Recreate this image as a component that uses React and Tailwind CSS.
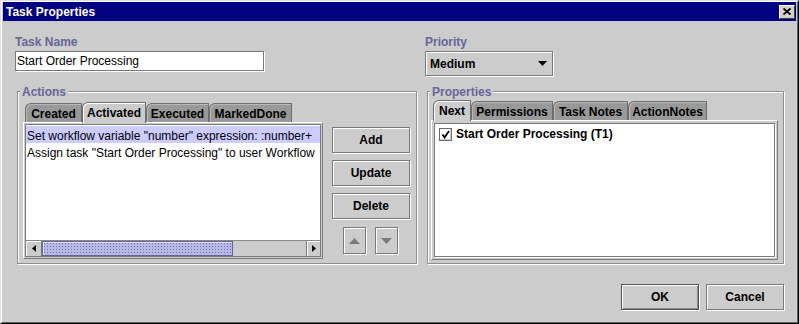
import React from 'react';

const flush = 'border border-[#7a7a7a] shadow-[inset_1px_1px_0_#ffffff,1px_1px_0_#ffffff]';

const Label = ({ children }) => (
  <div className="h-[16px] leading-[15px] text-[12px] font-bold text-[#666699]">{children}</div>
);

const Button = ({ children, primary }) => (
  <div
    className={
      primary
        ? 'w-[78px] h-[26px] flex items-center justify-center text-[12px] font-bold border border-[#505050] shadow-[inset_1px_1px_0_#ffffff,inset_-1px_-1px_0_#8a8a8a,1px_1px_0_#ffffff]'
        : 'w-[78px] h-[26px] flex items-center justify-center text-[12px] font-bold border border-[#7a7a7a] shadow-[inset_1px_1px_0_#ffffff,1px_1px_0_#ffffff]'
    }
  >
    {children}
  </div>
);

const Tab = ({ label, width, active }) => (
  <div
    className={
      active
        ? `${width} h-[21px] -mb-px relative z-10 flex items-center justify-center pb-px text-[12px] font-bold bg-[#cccccc] border border-b-0 border-[#6e6e6e] rounded-tl-[6px] shadow-[inset_1px_1px_0_#ffffff]`
        : `${width} h-[19px] flex items-center justify-center pt-px text-[12px] font-bold bg-[#999999] border border-b-0 border-[#6e6e6e] rounded-tl-[6px] shadow-[inset_1px_1px_0_#b8b8b8]`
    }
  >
    {label}
  </div>
);

const Group = ({ title, width, children }) => (
  <div className={`${width} h-[173px] relative border border-[#8e8e8e] shadow-[inset_1px_1px_0_#ffffff,1px_1px_0_#ffffff]`}>
    <span className="absolute left-[2px] top-[-7px] px-[2px] bg-[#cccccc] leading-[15px] text-[12px] font-bold text-[#666699]">
      {title}
    </span>
    {children}
  </div>
);

const Arrow = ({ dir }) => (
  <div className={`w-[23px] h-[27px] flex items-center justify-center ${flush}`}>
    <svg width="11" height="6" viewBox="0 0 11 6">
      {dir === 'up' ? (
        <polygon points="0,6 5.5,0 11,6" fill="#7a7a7a" />
      ) : (
        <polygon points="0,0 5.5,6 11,0" fill="#7a7a7a" />
      )}
    </svg>
  </div>
);

export default function App() {
  return (
    <div className="w-[799px] h-[324px] overflow-hidden bg-[#cccccc] text-black font-['Liberation_Sans',Arial,sans-serif] border border-t-[#e0e0e0] border-l-[#e0e0e0] border-r-black border-b-black">
      <div className="h-full flex flex-col border border-t-white border-l-white border-r-[#606060] border-b-[#606060]">
        {/* title bar */}
        <div className="h-[19px] mx-px bg-[#000080] flex items-center justify-between pl-[3px] pr-[1px]">
          <span className="text-white text-[12px] font-bold leading-none">Task Properties</span>
          <div className="w-[16px] h-[14px] bg-[#d4d0c8] flex items-center justify-center border border-t-white border-l-white border-r-[#404040] border-b-[#404040]">
            <svg width="8" height="7" viewBox="0 0 8 7">
              <path d="M0.5 0.5 L7.5 6.5 M7.5 0.5 L0.5 6.5" stroke="black" strokeWidth="1.8" />
            </svg>
          </div>
        </div>

        <div className="flex-1 flex flex-col pl-[13px] pt-[14px]">
          {/* name + priority */}
          <div className="flex">
            <div className="w-[410px]">
              <Label>Task Name</Label>
              <div className={`w-[249px] h-[20px] bg-white pl-px text-[12px] leading-[18px] ${flush}`}>
                Start Order Processing
              </div>
            </div>
            <div>
              <Label>Priority</Label>
              <div className={`w-[128px] h-[25px] flex items-center justify-between pl-[4px] pr-[5px] ${flush}`}>
                <span className="text-[12px] font-bold leading-[14px]">Medium</span>
                <svg width="9" height="5" viewBox="0 0 9 5">
                  <polygon points="0,0 9,0 4.5,5" fill="black" />
                </svg>
              </div>
            </div>
          </div>

          {/* groups */}
          <div className="flex mt-[15px] ml-[2px]">
            <Group title="Actions" width="w-[400px]">
              <div className="flex pl-[5px] pt-[10px]">
                <div className="w-[300px]">
                  <div className="h-[20px] flex items-end pl-[2px]">
                    <Tab label="Created" width="w-[57px]" />
                    <Tab label="Activated" width="w-[64px]" active />
                    <Tab label="Executed" width="w-[63px]" />
                    <Tab label="MarkedDone" width="w-[83px]" />
                  </div>
                  <div className="h-[137px] p-px border border-t-white border-l-white border-r-[#7a7a7a] border-b-[#7a7a7a]">
                    <div className="h-full flex flex-col border border-[#7a7a7a] bg-white">
                      <div className="flex-1 pt-px overflow-hidden whitespace-nowrap text-[12px]">
                        <div className="h-[17px] pt-[4px] pl-px leading-[13px] bg-[#ccccff]">
                          Set workflow variable "number" expression: :number+
                        </div>
                        <div className="h-[17px] pt-[4px] pl-px leading-[13px]">
                          Assign task "Start Order Processing" to user Workflow
                        </div>
                      </div>
                      <div className="h-[16px] flex border-t border-[#8a8a8a] bg-[#cccccc]">
                        <div className="w-[16px] flex items-center justify-center border-r border-[#7a7a7a] shadow-[inset_1px_1px_0_#ffffff]">
                          <svg width="4" height="7" viewBox="0 0 4 7">
                            <polygon points="4,0 0,3.5 4,7" fill="black" />
                          </svg>
                        </div>
                        <div className="w-[191px] border border-[#666699] bg-[#b8b8e8] bg-[image:radial-gradient(circle,#6f6fae_0.6px,transparent_0.9px)] bg-[length:3px_3px] shadow-[inset_1px_1px_0_#e0e0ff]" />
                        <div className="flex-1" />
                        <div className="w-[14px] flex items-center justify-center border-l border-[#7a7a7a] shadow-[inset_1px_1px_0_#ffffff]">
                          <svg width="4" height="7" viewBox="0 0 4 7">
                            <polygon points="0,0 4,3.5 0,7" fill="black" />
                          </svg>
                        </div>
                      </div>
                    </div>
                  </div>
                </div>

                <div className="ml-[9px] mt-[25px] flex flex-col gap-[7px]">
                  <Button>Add</Button>
                  <Button>Update</Button>
                  <Button>Delete</Button>
                  <div className="flex gap-[9px] pl-[11px] mt-px">
                    <Arrow dir="up" />
                    <Arrow dir="down" />
                  </div>
                </div>
              </div>
            </Group>

            <div className="ml-[10px]">
              <Group title="Properties" width="w-[357px]">
                <div className="pl-[3px] pt-[8px]">
                  <div className="h-[20px] flex items-end pl-[2px]">
                    <Tab label="Next" width="w-[38px]" active />
                    <Tab label="Permissions" width="w-[82px]" />
                    <Tab label="Task Notes" width="w-[75px]" />
                    <Tab label="ActionNotes" width="w-[79px]" />
                  </div>
                  <div className="w-[347px] h-[140px] p-[2px] border border-t-white border-l-white border-r-[#7a7a7a] border-b-[#7a7a7a]">
                    <div className="h-full border border-[#7a7a7a] bg-white shadow-[1px_1px_0_#ffffff]">
                      <div className="flex items-center ml-[4px] mt-[3px]">
                        <div className="w-[13px] h-[13px] bg-white border border-[#6a6a6a] shadow-[inset_-1px_-1px_0_#cccccc] flex items-center justify-center">
                          <svg width="9" height="9" viewBox="0 0 9 9">
                            <polyline points="1.5,4.5 3.5,7.5 8,1" fill="none" stroke="black" strokeWidth="1.8" />
                          </svg>
                        </div>
                        <span className="ml-[4px] text-[12px] font-bold leading-[14px]">Start Order Processing (T1)</span>
                      </div>
                    </div>
                  </div>
                </div>
              </Group>
            </div>
          </div>

          {/* dialog buttons */}
          <div className="flex justify-end gap-[7px] pr-[13px] mt-[20px]">
            <Button primary>OK</Button>
            <Button>Cancel</Button>
          </div>
        </div>
      </div>
    </div>
  );
}
